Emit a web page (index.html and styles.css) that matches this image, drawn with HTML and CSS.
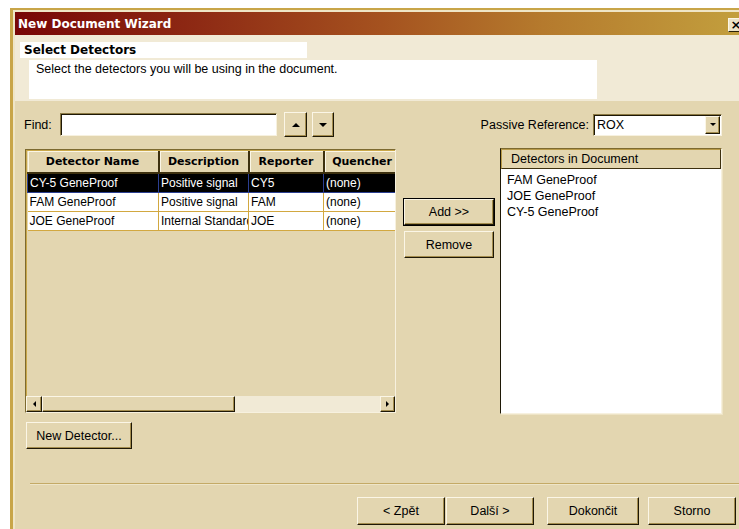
FILE: index.html
```html
<!DOCTYPE html>
<html lang="cs">
<head>
<meta charset="utf-8">
<title>New Document Wizard</title>
<link rel="stylesheet" href="styles.css">
</head>
<body>
<div class="window">
  <div class="titlebar">
    <span class="title">New Document Wizard</span>
    <span class="close">×</span>
  </div>
  <div class="client">
    <div class="header">
      <div class="step-title">Select Detectors</div>
      <div class="step-desc">Select the detectors you will be using in the document.</div>
    </div>

    <div class="content">
      <div class="top-row">
        <div class="find">
          <span class="find-label">Find:</span>
          <span class="textbox"></span>
          <span class="btn arrow-btn up"><span class="tri-up"></span></span>
          <span class="btn arrow-btn down"><span class="tri-down"></span></span>
        </div>
        <div class="passive">
          <span class="passive-label">Passive Reference:</span>
          <span class="combo">
            <span class="combo-value">ROX</span>
            <span class="btn combo-btn"><span class="tri-down small"></span></span>
          </span>
        </div>
      </div>

      <div class="main-row">
        <div class="left-col">
          <div class="gridbox">
            <div class="grid-view">
              <table class="grid">
                <colgroup>
                  <col class="c-name"><col class="c-desc"><col class="c-rep"><col class="c-q">
                </colgroup>
                <thead>
                  <tr><th>Detector Name</th><th>Description</th><th>Reporter</th><th>Quencher</th></tr>
                </thead>
                <tbody>
                  <tr class="selected"><td>CY-5 GeneProof</td><td>Positive signal</td><td>CY5</td><td>(none)</td></tr>
                  <tr><td>FAM GeneProof</td><td>Positive signal</td><td>FAM</td><td>(none)</td></tr>
                  <tr><td>JOE GeneProof</td><td>Internal Standard</td><td>JOE</td><td>(none)</td></tr>
                </tbody>
              </table>
            </div>
            <div class="hscroll">
              <span class="btn sb-btn"><span class="tri-left"></span></span>
              <span class="btn sb-thumb"></span>
              <span class="sb-track"></span>
              <span class="btn sb-btn right"><span class="tri-right"></span></span>
            </div>
          </div>
          <span class="btn push new-det">New Detector...</span>
        </div>

        <div class="mid-col">
          <span class="btn push default">Add &gt;&gt;</span>
          <span class="btn push remove">Remove</span>
        </div>

        <div class="listbox">
          <div class="list-head">Detectors in Document</div>
          <div class="list-items">
            <div>FAM GeneProof</div>
            <div>JOE GeneProof</div>
            <div>CY-5 GeneProof</div>
          </div>
        </div>
      </div>
    </div>

    <div class="footer">
      <div class="separator"></div>
      <div class="nav">
        <span class="btn push nav-btn back">&lt; Zpět</span>
        <span class="btn push nav-btn next">Další &gt;</span>
        <span class="btn push nav-btn finish">Dokončit</span>
        <span class="btn push nav-btn cancel">Storno</span>
      </div>
    </div>
  </div>
</div>
</body>
</html>
```
FILE: styles.css
```css
* { box-sizing: border-box; }

html, body {
  margin: 0;
  padding: 0;
  width: 739px;
  height: 529px;
  overflow: hidden;
  background: #ffffff;
}

body {
  font-family: "Liberation Sans", Arial, sans-serif;
  font-size: 12.5px;
  color: #000;
}

/* ---------- window frame ---------- */
.window {
  margin: 8px 0 0 10px;
  width: 738px;
  height: 540px;
  border-left: 3px solid #c8a548;
  border-top: 2px solid #c8a548;
  padding: 2px 0 0 2px;
  background: #efe5c6;
  display: flex;
  flex-direction: column;
}

.titlebar {
  height: 23px;
  flex: none;
  display: flex;
  align-items: center;
  justify-content: space-between;
  padding-left: 3px;
  padding-right: 4px;
  background: linear-gradient(to right, #780606 0%, #8e2a14 25%, #a5521f 50%, #b57a2d 72%, #c3a03e 100%);
}

.title {
  font-family: "DejaVu Sans", sans-serif;
  font-weight: bold;
  font-size: 12px;
  color: #fff;
}

.close {
  width: 16px;
  height: 14px;
  margin-top: 3px;
  background: #ece3c8;
  border: 1px solid;
  border-color: #fbf6e6 #2a2208 #2a2208 #fbf6e6;
  font-family: "DejaVu Sans", sans-serif;
  font-weight: bold;
  font-size: 13px;
  line-height: 11px;
  text-align: center;
}

.client {
  flex: 1;
  background: #e3d6b0;
  display: flex;
  flex-direction: column;
}

/* ---------- step header ---------- */
.header {
  height: 66px;
  flex: none;
  background: #f1ead6;
  padding: 7px 0 0 5px;
}

.step-title {
  width: 287px;
  height: 16px;
  background: #fff;
  padding-left: 4px;
  font-family: "DejaVu Sans", sans-serif;
  font-weight: bold;
  font-size: 12px;
  line-height: 16px;
}

.step-desc {
  width: 568px;
  height: 39px;
  margin: 2px 0 0 9px;
  background: #fff;
  padding: 2px 7px;
  line-height: 14px;
}

/* ---------- shared 3D button ---------- */
.btn {
  display: inline-flex;
  align-items: center;
  justify-content: center;
  background: #e3d6b0;
  border: 1px solid;
  border-color: #fbf6e6 #1e1806 #1e1806 #fbf6e6;
  box-shadow: inset -1px -1px 0 #a48d4e;
}

.push { white-space: nowrap; }

.default {
  outline: 1px solid #000;
  outline-offset: 0;
}

.tri-up, .tri-down, .tri-left, .tri-right {
  width: 0;
  height: 0;
  border-style: solid;
  border-color: transparent;
}
.tri-up { border-width: 0 4px 4px 4px; border-bottom-color: #000; }
.tri-down { border-width: 4px 4px 0 4px; border-top-color: #000; }
.tri-down.small { border-width: 3px 3px 0 3px; }
.tri-left { border-width: 3px 3px 3px 0; border-right-color: #000; }
.tri-right { border-width: 3px 0 3px 3px; border-left-color: #000; }

/* ---------- find row ---------- */
.content {
  padding: 11px 26px 0 9px;
}

.top-row {
  height: 25px;
  display: flex;
  align-items: center;
  justify-content: space-between;
}

.find {
  display: flex;
  align-items: center;
}

.find-label {
  width: 36px;
}

.textbox {
  width: 217px;
  height: 23px;
  background: #fff;
  border: 1px solid;
  border-color: #8c7a44 #f7f1df #f7f1df #8c7a44;
  box-shadow: inset 1px 1px 0 #1e1806;
}

.arrow-btn {
  width: 23px;
  height: 25px;
  margin-left: 7px;
}
.arrow-btn.down {
  width: 22px;
  margin-left: 5px;
}

.passive {
  display: flex;
  align-items: center;
}

.passive-label { margin-right: 4px; }

.combo {
  width: 129px;
  height: 22px;
  display: flex;
  align-items: center;
  justify-content: space-between;
  background: #fff;
  border: 1px solid;
  border-color: #8c7a44 #f7f1df #f7f1df #8c7a44;
  box-shadow: inset 1px 1px 0 #1e1806;
  padding: 1px 1px 1px 3px;
}

.combo-btn {
  width: 15px;
  height: 18px;
}

/* ---------- detector table ---------- */
.main-row {
  margin-top: 11px;
  display: flex;
  align-items: flex-start;
}

.left-col {
  margin: 1px 0 0 1px;
  display: flex;
  flex-direction: column;
  align-items: flex-start;
}

.gridbox {
  width: 371px;
  height: 264px;
  display: flex;
  flex-direction: column;
  border: 1px solid;
  border-color: #7d6a30 #f7f1df #f7f1df #7d6a30;
  box-shadow: inset 1px 1px 0 #c9a84a;
}

.grid-view {
  flex: 1;
  overflow: hidden;
  padding: 1px 0 0 1px;
}

.grid {
  table-layout: fixed;
  border-collapse: collapse;
  width: 373px;
  font-size: 12px;
}

.c-name { width: 131px; }
.c-desc { width: 90px; }
.c-rep { width: 75px; }
.c-q { width: 77px; }

.grid th {
  height: 22px;
  padding: 0;
  background: #e3d6b0;
  font-family: "DejaVu Sans", sans-serif;
  font-size: 11px;
  font-weight: bold;
  text-align: center;
  white-space: nowrap;
  overflow: hidden;
  border-right: 2px solid #3d300e;
  border-bottom: 2px solid #3d300e;
  box-shadow: inset 1px 1px 0 #fbf6e6;
}

.grid td {
  height: 19px;
  padding: 0 0 0 2px;
  background: #fff;
  white-space: nowrap;
  overflow: hidden;
  text-overflow: clip;
  border-right: 1px solid #d2a840;
  border-bottom: 1px solid #d2a840;
}

.grid tr.selected td {
  background: #000;
  color: #fff;
  border: 1px solid #2b3f92;
}

.hscroll {
  height: 16px;
  flex: none;
  display: flex;
}

.sb-btn {
  width: 16px;
  height: 16px;
}
.sb-btn.right { width: 15px; }

.sb-thumb {
  width: 193px;
  height: 16px;
}

.sb-track {
  flex: 1;
  background: #f1ead6;
}

.new-det {
  margin-top: 9px;
  margin-left: 1px;
  width: 106px;
  height: 27px;
}

/* ---------- add / remove ---------- */
.mid-col {
  margin: 51px 0 0 8px;
  width: 90px;
  display: flex;
  flex-direction: column;
}

.mid-col .push {
  width: 90px;
  height: 26px;
}

.mid-col .remove {
  height: 27px;
  margin-top: 6px;
}

/* ---------- selected detectors list ---------- */
.listbox {
  margin-left: 6px;
  width: 222px;
  height: 266px;
  background: #fff;
  border: 1px solid;
  border-color: #7d6a30 #f7f1df #f7f1df #1e1806;
  box-shadow: 1px 1px 0 #eee4c6;
}

.list-head {
  height: 20px;
  background: #e3d6b0;
  border: 1px solid #5a4818;
  border-color: #b89a48 #3d300e #3d300e #b89a48;
  padding-left: 9px;
  line-height: 18px;
}

.list-items {
  padding: 3px 0 0 6px;
  line-height: 16px;
}

/* ---------- wizard navigation ---------- */
.footer {
  margin-top: 34px;
}

.separator {
  margin-left: 15px;
  height: 2px;
  border-top: 1px solid #c4aa66;
  border-bottom: 1px solid #eee5c8;
}

.nav {
  margin-top: 12px;
  padding-left: 342px;
  display: flex;
}

.nav-btn {
  height: 28px;
  width: 88px;
}
.nav-btn.next { margin-left: 1px; }
.nav-btn.finish { margin-left: 13px; width: 92px; }
.nav-btn.cancel { margin-left: 9px; }
```
